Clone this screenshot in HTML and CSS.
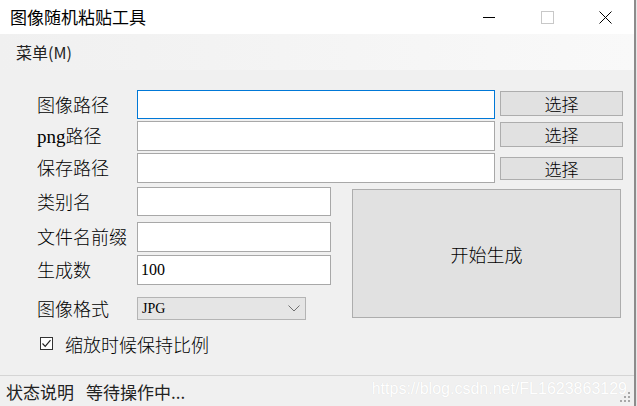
FILE: index.html
```html
<!DOCTYPE html>
<html lang="zh">
  <head>
    <meta charset="UTF-8" />
    <title>图像随机粘贴工具</title>
    <link rel="stylesheet" href="styles.css">
  </head>
  <body>
    <div class="window">
      <div class="titlebar">
        <span class="title">图像随机粘贴工具</span>
        <div class="controls">
          <div class="ctl">
            <svg width="13" height="13" viewBox="0 0 13 13"><path d="M0 6.5H12" stroke="#000" stroke-width="1"/></svg>
          </div>
          <div class="ctl">
            <svg width="13" height="13" viewBox="0 0 13 13"><rect x="0.5" y="0.5" width="12" height="12" fill="none" stroke="#c8c8c8" stroke-width="1"/></svg>
          </div>
          <div class="ctl">
            <svg width="13" height="13" viewBox="0 0 13 13"><path d="M0.5 0.5L12.5 12.5M12.5 0.5L0.5 12.5" stroke="#000" stroke-width="1"/></svg>
          </div>
        </div>
      </div>

      <div class="menubar"><span>菜单(M)</span></div>

      <div class="content">
        <div class="paths">
          <div class="row first">
            <label>图像路径</label>
            <input type="text" class="field wide focused">
            <button class="pick">选择</button>
          </div>
          <div class="row">
            <label><span class="latin">png</span>路径</label>
            <input type="text" class="field wide">
            <button class="pick">选择</button>
          </div>
          <div class="row">
            <label>保存路径</label>
            <input type="text" class="field wide">
            <button class="pick low">选择</button>
          </div>
        </div>

        <div class="lower">
          <div class="fields">
            <div class="row first">
              <label>类别名</label>
              <input type="text" class="field short">
            </div>
            <div class="row gap6">
              <label>文件名前缀</label>
              <input type="text" class="field short">
            </div>
            <div class="row gap3">
              <label>生成数</label>
              <input type="text" class="field short" value="100">
            </div>
            <div class="row select-row">
              <label>图像格式</label>
              <div class="select">
                <span>JPG</span>
                <svg width="12" height="7" viewBox="0 0 12 7"><path d="M0.5 0.5L6 6L11.5 0.5" fill="none" stroke="#707070" stroke-width="1"/></svg>
              </div>
            </div>
            <div class="check-row">
              <span class="checkbox">
                <svg width="11" height="11" viewBox="0 0 11 11"><path d="M1.5 5.5L4.2 8.3L9.5 2.2" fill="none" stroke="#222" stroke-width="1.2"/></svg>
              </span>
              <span>缩放时候保持比例</span>
            </div>
          </div>
          <button class="start">开始生成</button>
        </div>
      </div>

      <div class="statusbar">
        <span>状态说明</span>
        <span class="status-text">等待操作中...</span>
        <span class="watermark">https://blog.csdn.net/FL1623863129</span>
        <svg class="grip" width="12" height="12" viewBox="0 0 12 12">
          <rect x="9" y="1" width="2" height="2" fill="#a8a8a8"/>
          <rect x="5" y="5" width="2" height="2" fill="#a8a8a8"/>
          <rect x="9" y="5" width="2" height="2" fill="#a8a8a8"/>
          <rect x="1" y="9" width="2" height="2" fill="#a8a8a8"/>
          <rect x="5" y="9" width="2" height="2" fill="#a8a8a8"/>
          <rect x="9" y="9" width="2" height="2" fill="#a8a8a8"/>
        </svg>
      </div>
    </div>
  </body>
</html>
```

FILE: styles.css
```css
*{
  box-sizing: border-box;
}
body{
  margin: 0;
  background: #e6e6e6;
  font-family: "Noto Sans CJK SC", sans-serif;
  color: #000;
}
.window{
  width: 636px;
  height: 406px;
  background: #f0f0f0;
  border-right: 2px solid #8c8c8c;
  display: flex;
  flex-direction: column;
  position: relative;
  overflow: hidden;
}

/* title bar */
.titlebar{
  height: 34px;
  background: #fff;
  display: flex;
  align-items: center;
}
.title{
  flex: 1;
  padding-left: 10px;
  font-size: 17px;
  line-height: 34px;
}
.controls{
  display: flex;
  height: 100%;
}
.ctl{
  width: 58px;
  display: flex;
  align-items: center;
  justify-content: center;
}

/* menu */
.menubar{
  height: 36px;
  padding-left: 16px;
  display: flex;
  align-items: center;
  font-size: 16px;
  color: #222;
  background: linear-gradient(to right, #f0f0f0, #f9f9f9);
}

/* form */
.content{
  flex: 1;
  padding: 20px 0 0 37px;
  font-weight: 300;
}
.paths{
  display: flex;
  flex-direction: column;
  gap: 2px;
}
.row{
  display: flex;
  align-items: flex-start;
  height: 30px;
}
.row.first{
  height: 29px;
}
.row label{
  width: 100px;
  font-size: 18px;
  line-height: 29px;
  white-space: nowrap;
}
.latin{
  font-family: "Liberation Serif", serif;
  font-size: 19px;
}
.field{
  height: 100%;
  border: 1px solid #a8a8a8;
  background: #fff;
  outline: none;
  padding: 0 3px;
  font-family: "Liberation Serif", serif;
  font-weight: 300;
  font-size: 16px;
  color: #000;
}
.field.wide{
  width: 358px;
}
.field.short{
  width: 194px;
}
.field.focused{
  border-color: #0078d7;
}
.pick{
  margin: 1px 0 0 5px;
  width: 123px;
  height: 25px;
  background: #e1e1e1;
  border: 1px solid #adadad;
  font-family: "Noto Sans CJK SC", sans-serif;
  font-weight: 300;
  font-size: 17px;
  line-height: 21px;
  padding: 0;
  color: #000;
}
.pick.low{
  margin-top: 4px;
  height: 23px;
}

.lower{
  display: flex;
  align-items: flex-start;
  margin-top: 4px;
}
.fields{
  width: 294px;
  display: flex;
  flex-direction: column;
}
.row.gap6{
  margin-top: 6px;
}
.row.gap3{
  margin-top: 3px;
}
.row.select-row{
  margin-top: 12px;
  height: 23px;
}
.select-row label{
  line-height: 23px;
}
.select{
  width: 169px;
  height: 23px;
  background: #e5e5e5;
  border: 1px solid #b4b4b4;
  display: flex;
  align-items: center;
  justify-content: space-between;
  padding: 0 5px 0 4px;
  font-family: "Liberation Serif", serif;
  font-size: 14px;
}
.check-row{
  margin: 17px 0 0 3px;
  display: flex;
  align-items: center;
  gap: 12px;
  font-size: 18px;
  height: 13px;
}
.checkbox{
  width: 13px;
  height: 13px;
  border: 1px solid #333;
  background: #fff;
  display: flex;
  align-items: center;
  justify-content: center;
}

.start{
  margin: 2px 0 0 21px;
  width: 269px;
  height: 129px;
  background: #e1e1e1;
  border: 1px solid #adadad;
  font-family: "Noto Sans CJK SC", sans-serif;
  font-weight: 300;
  font-size: 18px;
  color: #000;
  padding: 0;
}

/* status bar */
.statusbar{
  height: 31px;
  border-top: 1px solid #d5d5d5;
  padding-left: 6px;
  display: flex;
  align-items: center;
  gap: 12px;
  font-size: 17px;
  color: #222;
  position: relative;
}
.watermark{
  position: absolute;
  right: 7px;
  top: 4px;
  font-family: "Liberation Sans", sans-serif;
  font-size: 16px;
  color: #fff;
  text-shadow: 0 0 1px rgba(0,0,0,0.1);
}
.grip{
  position: absolute;
  right: 3px;
  bottom: 3px;
}
```
